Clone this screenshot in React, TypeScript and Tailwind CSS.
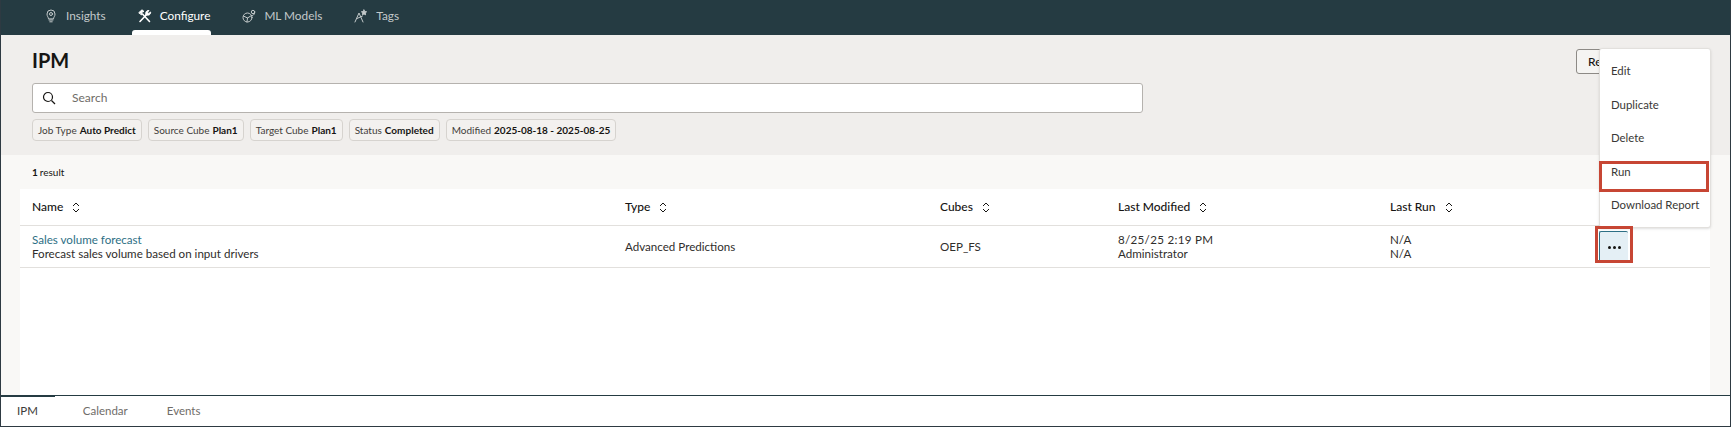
import React from "react";

const font = { fontFamily: 'Lato, "Noto Sans", sans-serif' };

function Sort() {
  return (
    <svg width="8" height="11" viewBox="0 0 8 11" fill="none" stroke="#161513" strokeWidth="1" className="ml-[9px] mt-[1px]">
      <path d="M1 4 L4 1 L7 4" />
      <path d="M1 7 L4 10 L7 7" />
    </svg>
  );
}

function Chip({ label, value }: { label: string; value: string }) {
  return (
    <div className="h-[22px] px-[5px] flex items-center gap-[3px] rounded-[4px] border border-[#d6d3cf] bg-[#f3f1ef] text-[10px] text-[#3f3d3a] whitespace-nowrap">
      <span>{label}</span>
      <span className="font-bold text-[#161513]">{value}</span>
    </div>
  );
}

function NavIcon({ kind, color }: { kind: string; color: string }) {
  const p = { fill: "none", stroke: color, strokeWidth: 1, strokeLinecap: "round" as const, strokeLinejoin: "round" as const };
  return (
    <svg width="14" height="14" viewBox="0 0 14 14" {...p}>
      {kind === "bulb" && (
        <>
          <path d="M4.5 9.5 C4.5 8.2 3 7.5 3 5 A4 4 0 0 1 11 5 C11 7.5 9.5 8.2 9.5 9.5 Z" />
          <circle cx="7" cy="5" r="1.5" />
          <path d="M5 11 H9 M5.8 12.8 H8.2" />
        </>
      )}
      {kind === "tools" && (
        <>
          <path d="M1 3.5 L4 0.8 L6 2.5 L4 3 L3.5 5.5 Z" fill={color} />
          <path d="M4.5 5 L11.5 12.5" strokeWidth="1.6" />
          <path d="M2 12.5 L8.2 6" strokeWidth="1.6" />
          <path d="M8 5.8 C7 3.5 8.5 1.2 11 1.5 L9.5 3.2 L10.8 4.5 L12.6 3 C13 5.5 10.5 7 8 5.8 Z" fill={color} />
        </>
      )}
      {kind === "ml" && (
        <>
          <circle cx="5.5" cy="8.5" r="4.5" />
          <path d="M1.5 7 L5.5 9 L9.5 6.5 M5.5 9 L5 13" />
          <circle cx="11" cy="3" r="1.7" />
          <path d="M12.7 3 C12.7 5 12 6 10.5 6.5" />
        </>
      )}
      {kind === "tags" && (
        <>
          <path d="M1 13 L5 4 L9 13 M3 9.5 L8.5 7" />
          <path d="M10 1 L10.7 2.6 L12.6 2.8 L11.2 4 L11.6 5.8 L10 4.9 L8.4 5.8 L8.8 4 L7.4 2.8 L9.3 2.6 Z" fill={color} />
        </>
      )}
    </svg>
  );
}

function NavItem({ kind, label, active }: { kind: string; label: string; active?: boolean }) {
  const color = active ? "#ffffff" : "#c3c9ca";
  return (
    <div className="relative h-full flex items-center gap-[8px] pl-[6px] pr-[1px] pb-[3px]">
      <NavIcon kind={kind} color={color} />
      <span className={active ? "text-white text-[11.8px]" : "text-[#c3c9ca] text-[11.8px]"}>{label}</span>
      {active && <div className="absolute left-0 right-0 bottom-0 h-[5px] bg-white rounded-t-[3px]" />}
    </div>
  );
}

const cols = "grid grid-cols-[593px_315px_178px_272px_1fr]";

function Head({ label }: { label: string }) {
  return (
    <div className="flex items-center text-[12px] font-medium text-[#161513]">
      <span>{label}</span>
      <Sort />
    </div>
  );
}

export default function App() {
  return (
    <div style={font} className="relative w-[1731px] h-[427px] overflow-hidden flex flex-col bg-[#f9f8f6] border-x border-b border-[#2e3a42] text-[11.6px] text-[#161513]">
      <nav className="h-[35px] shrink-0 bg-[#253b42] flex items-stretch pl-[37px] gap-[25px]">
        <NavItem kind="bulb" label="Insights" />
        <NavItem kind="tools" label="Configure" active />
        <NavItem kind="ml" label="ML Models" />
        <NavItem kind="tags" label="Tags" />
      </nav>

      <header className="h-[120px] shrink-0 bg-[#f0eeec] pl-[31px] pt-[12px] relative">
        <h1 className="text-[20px] leading-[27px] font-bold text-[#161513]">IPM</h1>
        <div className="mt-[9px] w-[1111px] h-[30px] flex items-center bg-white border border-[#b5b2ae] rounded-[3px]">
          <svg width="14" height="14" viewBox="0 0 14 14" fill="none" stroke="#161513" strokeWidth="1.2" className="ml-[9px]">
            <circle cx="6" cy="6" r="4.5" />
            <path d="M9.5 9.5 L13 13" />
          </svg>
          <span className="ml-[16px] text-[12px] text-[#6f6c68]">Search</span>
        </div>
        <div className="mt-[6px] flex gap-[6px]">
          <Chip label="Job Type" value="Auto Predict" />
          <Chip label="Source Cube" value="Plan1" />
          <Chip label="Target Cube" value="Plan1" />
          <Chip label="Status" value="Completed" />
          <Chip label="Modified" value="2025-08-18 - 2025-08-25" />
        </div>
      </header>

      <div className="h-[34px] shrink-0 flex items-center pl-[31px] text-[10px]">
        <span className="font-bold">1</span>
        <span className="ml-[2px]">result</span>
      </div>

      <main className="flex-1 ml-[19px] mr-[20px] bg-white">
        <div className={`${cols} h-[37px] pl-[12px] items-center border-b border-[#e2e0dd]`}>
          <Head label="Name" />
          <Head label="Type" />
          <Head label="Cubes" />
          <Head label="Last Modified" />
          <Head label="Last Run" />
        </div>
        <div className={`${cols} h-[42px] pl-[12px] items-center border-b border-[#e2e0dd] leading-[14px] text-[#2f2d2b]`}>
          <div>
            <div className="text-[#2d6f85]">Sales volume forecast</div>
            <div>Forecast sales volume based on input drivers</div>
          </div>
          <div>Advanced Predictions</div>
          <div>OEP_FS</div>
          <div>
            <div className="tracking-[0.3px]">8/25/25 2:19 PM</div>
            <div>Administrator</div>
          </div>
          <div>
            <div>N/A</div>
            <div>N/A</div>
          </div>
        </div>
      </main>

      <footer className="h-[31px] shrink-0 bg-white border-t border-[#253b42] relative flex items-center text-[11.5px] text-[#6f6c68]">
        <div className="absolute left-0 top-[-1px] w-[54px] h-[2px] bg-[#253b42]" />
        <span className="ml-[16px] text-[#3d3b38]">IPM</span>
        <span className="ml-[45px]">Calendar</span>
        <span className="ml-[39px]">Events</span>
      </footer>

      <div className="absolute left-[1575px] top-[49px] w-[40px] h-[25px] border border-[#8d8a86] rounded-[3px] bg-[#f5f4f2] pl-[11px] flex items-center text-[12px] font-medium">
        Re
      </div>

      <div className="absolute left-[1598px] top-[48px] w-[112px] h-[180px] bg-white border border-[#e2e0dd] rounded-[3px] pl-[11px] pt-[5px] flex flex-col text-[11.4px] text-[#3a3836] shadow-sm">
        <div className="h-[33.5px] flex items-center">Edit</div>
        <div className="h-[33.5px] flex items-center">Duplicate</div>
        <div className="h-[33.5px] flex items-center">Delete</div>
        <div className="h-[33.5px] flex items-center">Run</div>
        <div className="h-[33.5px] flex items-center">Download Report</div>
      </div>

      <div className="absolute left-[1598px] top-[231px] w-[29px] h-[31px] bg-[#e4eff5] border-t border-l border-[#2d6f85] rounded-t-[2px] flex items-center justify-center gap-[2px]">
        <span className="w-[3px] h-[3px] rounded-full bg-[#161513]" />
        <span className="w-[3px] h-[3px] rounded-full bg-[#161513]" />
        <span className="w-[3px] h-[3px] rounded-full bg-[#161513]" />
      </div>

      <div className="absolute left-[1598px] top-[161px] w-[110px] h-[31px] border-[3px] border-[#c74634]" />
      <div className="absolute left-[1594px] top-[226px] w-[38px] h-[37px] border-[3px] border-[#c74634]" />
    </div>
  );
}
